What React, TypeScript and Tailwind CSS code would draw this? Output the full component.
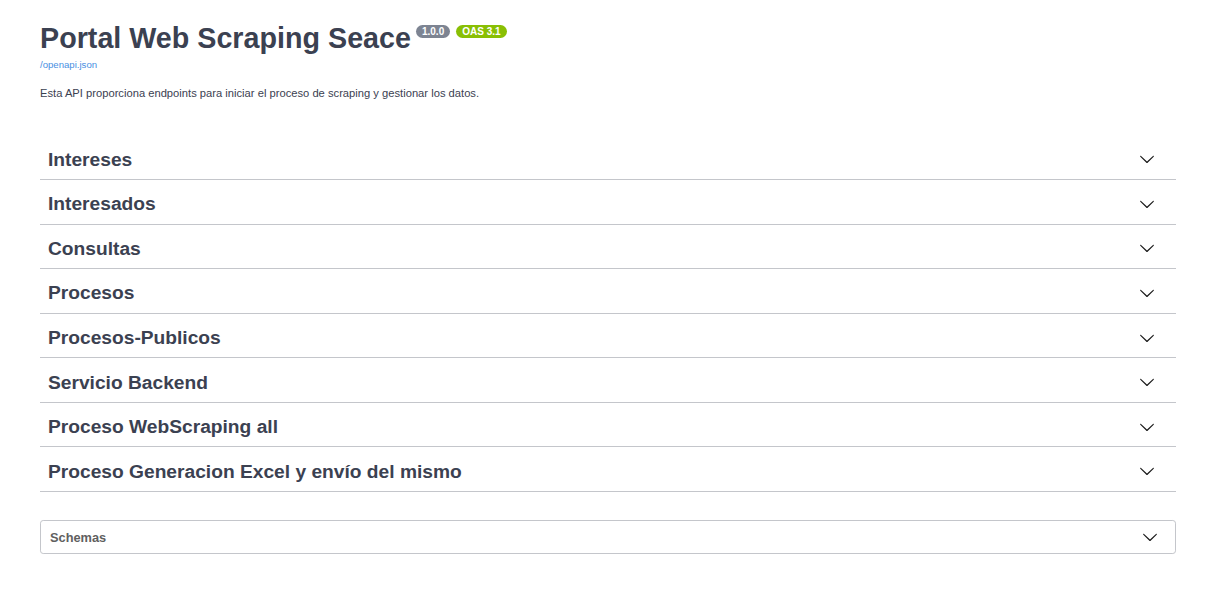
import React from 'react';

const tags = [
  'Intereses',
  'Interesados',
  'Consultas',
  'Procesos',
  'Procesos-Publicos',
  'Servicio Backend',
  'Proceso WebScraping all',
  'Proceso Generacion Excel y envío del mismo',
];

const Arrow: React.FC<{ className?: string }> = ({ className }) => (
  <svg viewBox="0 0 20 20" className={className} fill="#1b1b1b" aria-hidden="true">
    <path d="M17.418 6.109c.272-.268.709-.268.979 0s.271.701 0 .969l-7.908 7.83c-.27.268-.707.268-.979 0l-7.908-7.83c-.27-.268-.27-.701 0-.969.271-.268.709-.268.979 0L10 13.25l7.418-7.141z" />
  </svg>
);

const App: React.FC = () => {
  return (
    <div className="min-h-[611px] w-full bg-white font-['Liberation_Sans',Arial,sans-serif] text-[#3b4151]">
      <div className="pl-[40px] pr-[33px]">
        <div className="pt-[22px]">
          <div className="flex items-start">
            <h2 className="text-[28.7px] font-bold leading-[33px] text-[#3b4151]">
              Portal Web Scraping Seace
            </h2>
            <span className="ml-[5px] mt-[3px] rounded-full bg-[#7d8492] px-[6px] py-[1.5px] text-[10px] font-bold leading-[10px] text-white">
              1.0.0
            </span>
            <span className="ml-[6px] mt-[3px] rounded-full bg-[#89bf04] px-[6px] py-[1.5px] text-[10px] font-bold leading-[10px] text-white">
              OAS 3.1
            </span>
          </div>
          <a className="mt-[4px] block text-[9.6px] leading-[11px] text-[#4990e2]">/openapi.json</a>
          <p className="mt-[15px] text-[11.2px] leading-[16px] text-[#3b4151]">
            Esta API proporciona endpoints para iniciar el proceso de scraping y gestionar los datos.
          </p>
        </div>

        <div className="mt-[38.5px]">
          {tags.map((tag) => (
            <div
              key={tag}
              className="mb-1 flex h-[40.57px] items-center justify-between border-b border-[#c4c6cb] pl-[8px] pr-[21px]"
            >
              <h3 className="text-[19.2px] font-bold leading-[23px] text-[#3b4151]">{tag}</h3>
              <Arrow className="h-4 w-4" />
            </div>
          ))}
        </div>

        <div className="mt-[28px] flex h-[34px] items-center justify-between rounded-[3.2px] border border-[#c4c6cb] pl-[9px] pr-[17px]">
          <h4 className="text-[12.8px] font-bold leading-[15px] text-[#606060]">Schemas</h4>
          <Arrow className="h-4 w-4" />
        </div>
      </div>
    </div>
  );
};

export default App;
